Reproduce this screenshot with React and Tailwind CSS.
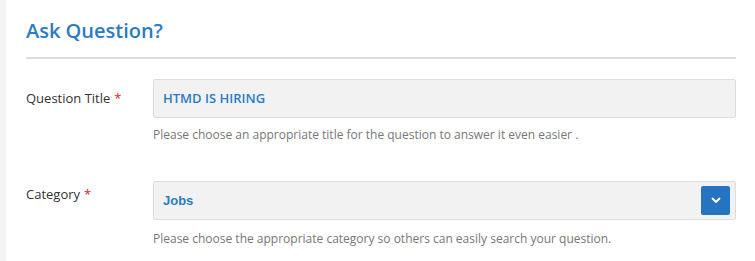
import React from "react";

export default function App() {
  return (
    <div className="flex w-[755px] h-[261px] overflow-hidden bg-white" style={{ fontFamily: '"Open Sans", sans-serif' }}>
      <div className="w-[6px] shrink-0 bg-[#f3f3f3]" />
      <div className="flex-1 pl-[20px] pr-[19px]">
        <h2 className="pt-[17px] pb-[12px] text-[20px] leading-[28px] font-semibold text-[#2b7bc5] border-b-2 border-[#dddddd]">
          Ask Question?
        </h2>
        <div className="mt-[20px] flex">
          <div className="w-[127px] shrink-0 h-[39px] flex items-center text-[13px] text-[#333333]">
            Question Title<span className="ml-[4px] text-[#e02020]">*</span>
          </div>
          <div className="flex-1">
            <div className="h-[39px] flex items-center px-[9px] bg-[#f2f2f2] border border-[#dddddd] rounded-[2px] text-[13px] font-semibold text-[#2b7bc5]">
              HTMD IS HIRING
            </div>
            <p className="mt-[9px] text-[12px] leading-[16px] text-[#777777]">
              Please choose an appropriate title for the question to answer it even easier .
            </p>
          </div>
        </div>
        <div className="mt-[38px] flex">
          <div className="w-[127px] shrink-0 h-[27px] flex items-center text-[13px] text-[#333333]">
            Category<span className="ml-[4px] text-[#e02020]">*</span>
          </div>
          <div className="flex-1">
            <div className="h-[39px] flex items-center justify-between pl-[9px] pr-[5px] bg-[#f2f2f2] border border-[#dddddd] rounded-[2px]">
              <span className="text-[13px] font-bold text-[#2b7bc5]" style={{ fontFamily: '"Liberation Sans", Arial, sans-serif' }}>Jobs</span>
              <span className="w-[29px] h-[29px] flex items-center justify-center bg-[#2673c1] rounded-[2px]">
                <svg width="10" height="7" viewBox="0 0 10 7" fill="none">
                  <path d="M1.5 1.5L5 5L8.5 1.5" stroke="white" strokeWidth="1.8" strokeLinecap="round" strokeLinejoin="round" />
                </svg>
              </span>
            </div>
            <p className="mt-[11px] text-[12px] leading-[16px] text-[#777777]">
              Please choose the appropriate category so others can easily search your question.
            </p>
          </div>
        </div>
      </div>
    </div>
  );
}
